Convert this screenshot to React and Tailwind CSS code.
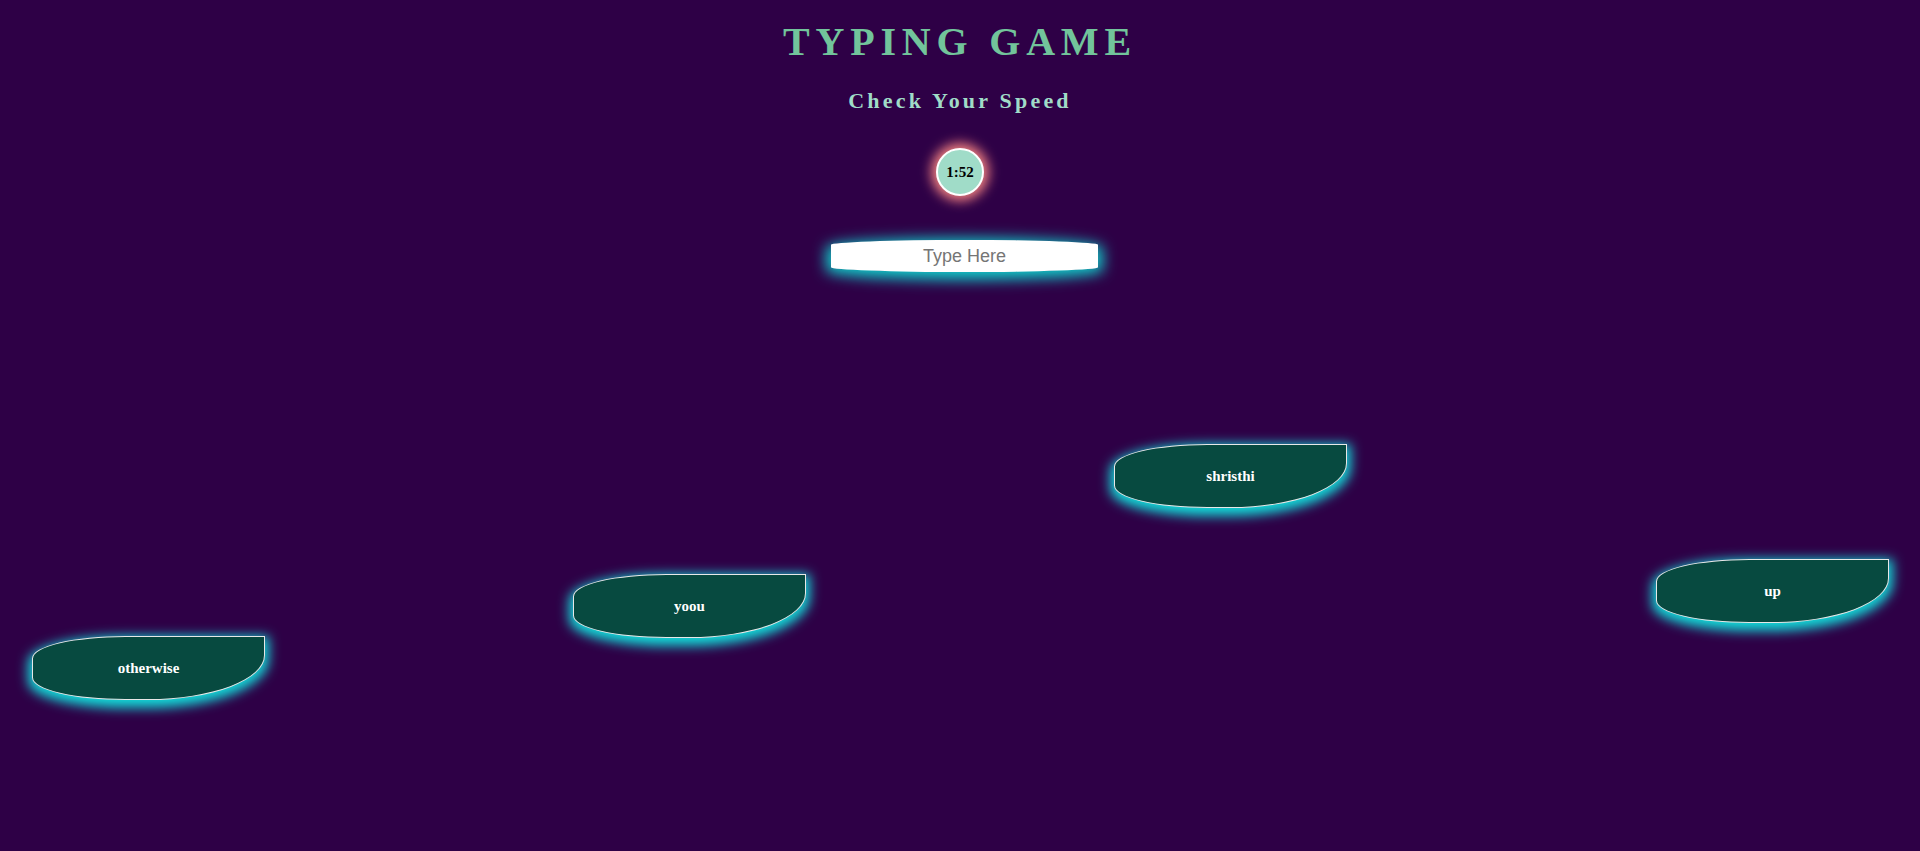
import React from "react";

const words = [
  { text: "shristhi", left: 1114, top: 444 },
  { text: "yoou", left: 573, top: 574 },
  { text: "otherwise", left: 32, top: 636 },
  { text: "up", left: 1656, top: 559 },
];

export default function App() {
  return (
    <div className="relative w-full h-[851px] overflow-hidden bg-[#2e0046] font-['Liberation_Serif',serif]">
      <div className="flex flex-col items-center pt-[19px]">
        <h1 className="text-[40px] leading-[46px] font-bold tracking-[5.8px] text-[#72c49b]">
          TYPING GAME
        </h1>
        <h2 className="mt-[23px] text-[22px] leading-[25px] font-bold tracking-[3.2px] text-[#a0dcc8]">
          Check Your Speed
        </h2>
        <div className="mt-[35px] w-[48px] h-[48px] rounded-full border-2 border-white bg-[#a0dcc8] shadow-[0_0_12px_5px_#f08080] flex items-center justify-center text-[15px] font-bold text-black">
          1:52
        </div>
        <input
          type="text"
          placeholder="Type Here"
          className="mt-[44px] ml-[9px] w-[267px] h-[32px] bg-white rounded-[50%/15%] text-center text-[18px] font-['Liberation_Sans',sans-serif] text-black placeholder:text-[#757575] outline-none shadow-[0_3px_14px_5px_#12c8c8]"
        />
      </div>
      {words.map((w) => (
        <div
          key={w.text}
          className="absolute w-[233px] h-[64px] bg-[#074a40] border border-[#e8e8e8] rounded-[40%_0_50%_40%/35%_0_70%_35%] shadow-[0_4px_12px_4px_#14d8d8] flex items-center justify-center text-white text-[15px] font-bold"
          style={{ left: w.left, top: w.top }}
        >
          {w.text}
        </div>
      ))}
    </div>
  );
}
